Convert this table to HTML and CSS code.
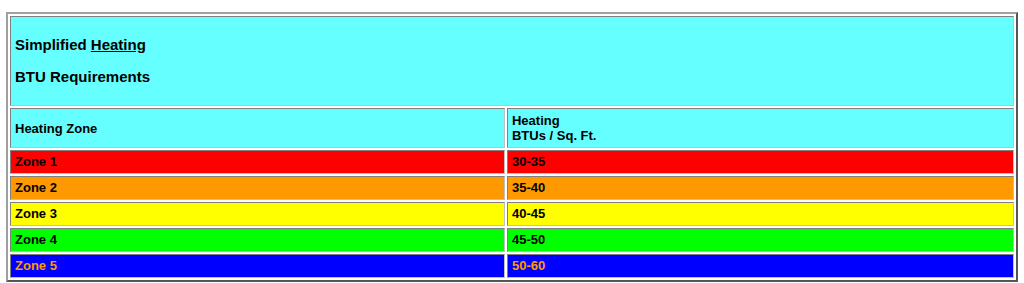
FILE: index.html
```html
<!DOCTYPE html>
<html>
<head>
<meta charset="utf-8">
<link rel="stylesheet" href="styles.css">
</head>
<body>
<table class="btu">
  <colgroup>
    <col class="c1">
    <col class="c2">
  </colgroup>
  <tr>
    <td class="title" colspan="2">
      <p>Simplified <u>Heating</u></p>
      <p>BTU Requirements</p>
    </td>
  </tr>
  <tr class="head">
    <td>Heating Zone</td>
    <td>Heating<br>BTUs / Sq. Ft.</td>
  </tr>
  <tr class="z1"><td>Zone 1</td><td>30-35</td></tr>
  <tr class="z2"><td>Zone 2</td><td>35-40</td></tr>
  <tr class="z3"><td>Zone 3</td><td>40-45</td></tr>
  <tr class="z4"><td>Zone 4</td><td>45-50</td></tr>
  <tr class="z5"><td>Zone 5</td><td>50-60</td></tr>
</table>
</body>
</html>
```
FILE: styles.css
```css
html, body {
  margin: 0;
  padding: 0;
  background: #ffffff;
}
body {
  padding: 12px 6px 0 6px;
  font-family: "Liberation Sans", Arial, sans-serif;
}
.btu {
  width: 100%;
  table-layout: fixed;
  border-collapse: separate;
  border-spacing: 2px;
  border-style: solid;
  border-width: 2px;
  border-color: #a0a0a0 #555555 #555555 #a0a0a0;
}
.c1 { width: 49.4%; }
.btu td {
  padding: 4px;
  font-size: 13px;
  line-height: 14px;
  font-weight: bold;
  color: #000;
  vertical-align: middle;
  border-style: solid;
  border-width: 1px;
  border-color: #808080 #c0c0c0 #c0c0c0 #808080;
}
.btu td.title {
  background: #66ffff;
  font-size: 15px;
  line-height: 17px;
  padding: 4px 4px 5px;
}
.title p {
  margin: 15px 0;
}
.head td {
  background: #66ffff;
  line-height: 15px;
}
.z1 td { background: #ff0000; }
.z2 td { background: #ff9900; }
.z3 td { background: #ffff00; }
.z4 td { background: #00ff00; }
.z5 td { background: #0000ff; color: #ff9900; }
```
